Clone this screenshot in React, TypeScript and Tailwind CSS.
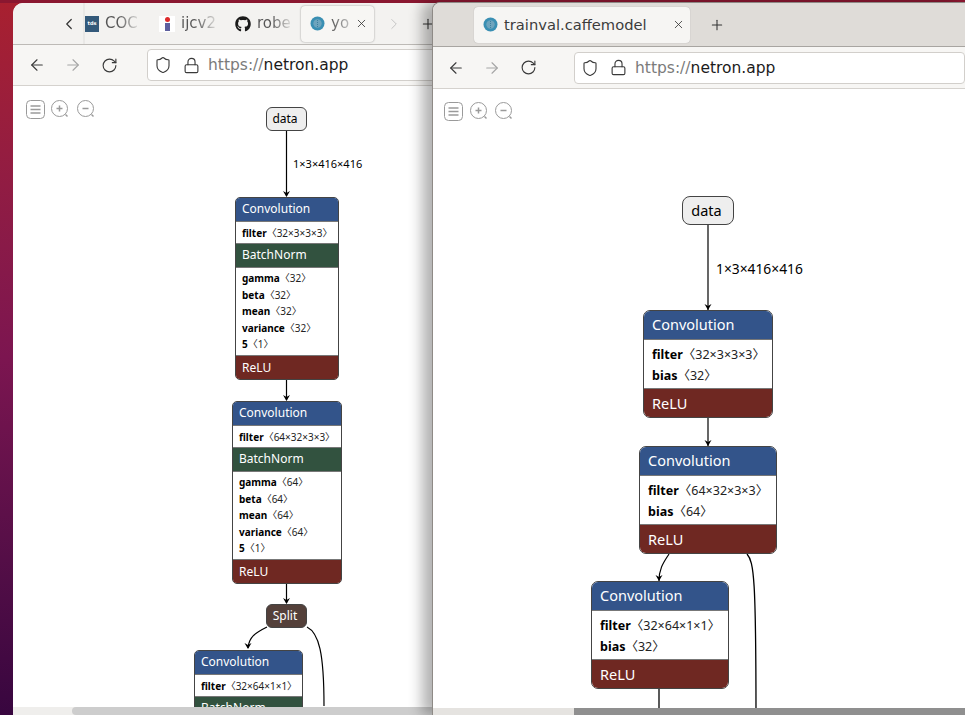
import { ArrowLeft, ArrowRight, ChevronLeft, ChevronRight, Lock, Plus, RotateCw, Shield, X } from 'lucide-react';
import { FaGithub } from 'react-icons/fa';

const uiFont = "font-['DejaVu_Sans',sans-serif]";
const graphFont = "font-['Noto_Sans','Noto_Sans_CJK_SC',sans-serif]";

function NetronIcon() {
  return (
    <svg width="15" height="15" viewBox="0 0 15 15" className="shrink-0">
      <circle cx="7.5" cy="7.5" r="7" fill="#3a8fb3" />
      <circle cx="7.5" cy="7.5" r="4.2" fill="#6ea4bd" />
      <path d="M7.5 4v7" stroke="#3d7f9e" strokeWidth="1" strokeDasharray="1 1" />
    </svg>
  );
}

function FadedText({ children }: { children: string }) {
  return (
    <span className="whitespace-nowrap bg-gradient-to-r from-[#555] from-40% to-[#dcdbd9] bg-clip-text text-[15px] text-transparent">
      {children}
    </span>
  );
}

function Toolbar({ className, boxClass }: { className: string; boxClass: string }) {
  return (
    <div className={`flex shrink-0 items-center border-b border-[#d5d2ce] bg-[#f7f6f4] text-[#3a3a3a] ${className}`}>
      <ArrowLeft size={18} strokeWidth={1.5} />
      <ArrowRight size={18} strokeWidth={1.5} className="ml-[18px] text-[#a5a5a5]" />
      <RotateCw size={17} strokeWidth={1.6} className="ml-[19px]" />
      <div className={`flex h-8 grow items-center rounded-[4px] border border-[#d2cfcb] bg-white pl-[6px] ${boxClass}`}>
        <Shield size={18} strokeWidth={1.5} />
        <Lock size={17} strokeWidth={1.6} className="ml-[11px]" />
        <span className={`ml-2 pt-[2px] text-[15.5px] ${uiFont}`}>
          <span className="text-[#7b7b7b]">https://</span>
          <span className="text-[#1b1b1b]">netron.app</span>
        </span>
      </div>
    </div>
  );
}

function ZoomIcon({ minus }: { minus?: boolean }) {
  return (
    <svg width="20" height="20" viewBox="0 0 20 20" fill="none" stroke="#9a9a9a" strokeWidth="1">
      <circle cx="9.5" cy="9.5" r="8" />
      <path d={minus ? 'M6.5 9.5h6' : 'M6.5 9.5h6M9.5 6.5v6'} strokeWidth="1.5" />
      <path d="M15.5 15.5l2 2" strokeWidth="1.5" />
    </svg>
  );
}

function GraphTools() {
  return (
    <div className="flex items-center gap-[5.5px]">
      <svg width="19" height="19" viewBox="0 0 19 19" fill="none" stroke="#9a9a9a">
        <rect x="0.5" y="0.5" width="18" height="18" rx="4" />
        <path d="M4.5 6h10M4.5 9.5h10M4.5 13h10" strokeWidth="1.3" />
      </svg>
      <ZoomIcon />
      <ZoomIcon minus />
    </div>
  );
}

type Row = [string, string];

type NodeProps = {
  x: number;
  y: number;
  w: number;
  big?: boolean;
  sections: (string | Row[])[];
};

const sectionColors: Record<string, string> = {
  Convolution: 'bg-[#33548a] leading-[var(--head)]',
  BatchNorm: 'bg-[#32523f] leading-[var(--line)]',
  ReLU: 'bg-[#6f2822] leading-[var(--foot)]',
};

function GraphNode({ x, y, w, big, sections }: NodeProps) {
  return (
    <div
      className={`absolute overflow-hidden border border-[#444] bg-white ${graphFont} ${big ? 'rounded-[7px] [--foot:28px] [--head:26px] [--line:28px]' : 'rounded-[5px] [--foot:23px] [--head:22px] [--line:22px]'}`}
      style={{ left: x, top: y, width: w }}
    >
      {sections.map((section, i) =>
        typeof section === 'string' ? (
          <div
            key={i}
            className={`${sectionColors[section]} text-white ${big ? 'h-[28px] pl-2 text-[14.5px]' : 'h-[23px] pl-[6px] text-[12px]'}`}
          >
            {section}
          </div>
        ) : (
          <div
            key={i}
            className={`border-y border-[#777] text-black ${big ? 'pb-[2.5px] pl-2 pt-[3.5px] text-[12.5px] leading-[21px]' : 'pb-[1.5px] pl-[6px] pt-[2.5px] text-[10px] leading-[16.6px]'}`}
          >
            {section.map(([name, value]) => (
              <div key={name} className="whitespace-nowrap">
                <b>{name}</b>
                <span className="text-[#222]">〈{value}〉</span>
              </div>
            ))}
          </div>
        ),
      )}
    </div>
  );
}

function Pill({ x, y, w, h, dark, big, label }: { x: number; y: number; w: number; h: number; dark?: boolean; big?: boolean; label: string }) {
  return (
    <div
      className={`absolute flex items-center justify-center border border-[#444] pr-[3px] ${graphFont} ${big ? 'rounded-[8px] text-[14.5px]' : 'rounded-[6px] text-[12px]'} ${dark ? 'bg-[#54403a] text-white' : 'bg-[#eeeeee] text-black'}`}
      style={{ left: x, top: y, width: w, height: h }}
    >
      {label}
    </div>
  );
}

function Arrow({ d, tip }: { d: string; tip: [number, number] }) {
  const [x, y] = tip;
  return (
    <>
      <path d={d} fill="none" stroke="#000" strokeWidth="1.2" />
      <path d={`M${x - 3.5} ${y - 6}L${x} ${y}L${x + 3.5} ${y - 6}L${x} ${y - 4}Z`} fill="#000" />
    </>
  );
}

function LeftWindow() {
  return (
    <section className="absolute left-[13px] top-[3px] flex h-[712px] w-[952px] flex-col overflow-hidden rounded-t-[10px] bg-white">
      <div className={`flex h-[42px] shrink-0 items-center border-b border-[#bdbab6] bg-[#f3f2f0] ${uiFont}`}>
        <div className="flex h-full w-[72px] items-center justify-end border-r-2 border-[#e9e8e6] pr-[5px] text-[#333]">
          <ChevronLeft size={18} strokeWidth={1.6} />
        </div>
        <div className="flex w-[74px] items-center gap-[6px]">
          <span className="flex h-4 w-[14px] items-center justify-center bg-[#33597a] text-[5px] font-bold text-white">tds</span>
          <FadedText>COC</FadedText>
        </div>
        <div className="flex w-[76px] items-center gap-[6px]">
          <span className="flex h-4 w-4 flex-col items-center bg-white pt-px">
            <span className="h-[5px] w-[5px] rounded-full bg-[#dd2a2a]" />
            <span className="mt-px h-2 w-[5px] bg-[#5e5f9e]" />
          </span>
          <FadedText>ijcv2</FadedText>
        </div>
        <div className="flex w-[66px] items-center gap-[6px]">
          <FaGithub size={16} className="text-[#1a1a1a]" />
          <FadedText>robe</FadedText>
        </div>
        <div className="flex h-[36px] w-[73px] items-center gap-[6px] rounded-[4px] bg-[#f7f6f4] pl-[9px] shadow-[0_0_2px_rgba(0,0,0,0.4)]">
          <NetronIcon />
          <span className="w-[23px] whitespace-nowrap bg-gradient-to-r from-[#555] to-[#ddd] bg-clip-text text-[15px] text-transparent">yo</span>
          <X size={13} strokeWidth={1.5} className="-ml-[5px] text-[#333]" />
        </div>
        <ChevronRight size={18} strokeWidth={1.2} className="ml-[11px] text-[#c0c0c0]" />
        <Plus size={16} strokeWidth={1.6} className="ml-[17px] text-[#333]" />
      </div>
      <Toolbar className="h-[41px] pl-[15px]" boxClass="ml-[29px]" />
      <div className="relative grow bg-white">
        <div className="absolute left-[12.5px] top-[13px]">
          <GraphTools />
        </div>
        <svg className="absolute left-0 top-0" width="420" height="630">
          <Arrow d="M273.5 44V110" tip={[273.5, 111]} />
          <Arrow d="M273.5 293V314" tip={[273.5, 315]} />
          <Arrow d="M273.5 496V517" tip={[273.5, 518]} />
          <Arrow d="M254 541C242 547 236 551 235 562" tip={[235, 563]} />
          <path d="M294 541C306 547 311 567 311 620" fill="none" stroke="#000" strokeWidth="1.2" />
        </svg>
        <Pill x={253} y={21} w={41} h={24} label="data" />
        <span className={`absolute left-[280px] top-[70px] text-[11px] text-black ${graphFont}`}>1×3×416×416</span>
        <GraphNode
          x={222}
          y={111}
          w={104}
          sections={[
            'Convolution',
            [['filter', '32×3×3×3']],
            'BatchNorm',
            [['gamma', '32'], ['beta', '32'], ['mean', '32'], ['variance', '32'], ['5', '1']],
            'ReLU',
          ]}
        />
        <GraphNode
          x={219}
          y={315}
          w={110}
          sections={[
            'Convolution',
            [['filter', '64×32×3×3']],
            'BatchNorm',
            [['gamma', '64'], ['beta', '64'], ['mean', '64'], ['variance', '64'], ['5', '1']],
            'ReLU',
          ]}
        />
        <Pill x={253} y={518} w={41} h={24} dark label="Split" />
        <GraphNode x={181} y={564} w={109} sections={['Convolution', [['filter', '32×64×1×1']], 'BatchNorm']} />
        <div className="absolute bottom-0 left-0 right-0 h-2 bg-[#efeeec]">
          <div className="ml-[59px] h-2 rounded-full bg-[#cdcdcd]" />
        </div>
      </div>
    </section>
  );
}

function RightWindow() {
  return (
    <section className="absolute left-[432px] top-[2px] flex h-[713px] w-[533px] flex-col overflow-hidden rounded-tl-[8px] border-l border-t border-[#8e8a86] bg-white shadow-[-10px_0_14px_rgba(0,0,0,0.3)]">
      <div className={`flex h-[44px] shrink-0 items-center border-b border-[#a8a5a1] bg-[#dfdcd8] pl-[41px] ${uiFont}`}>
        <div className="flex h-9 w-[216px] items-center rounded-[4px] bg-[#f6f5f3] pl-[9px] shadow-[0_0_1px_rgba(0,0,0,0.3)]">
          <NetronIcon />
          <span className="ml-[6px] pt-px text-[14.7px] text-[#3c3c3c]">trainval.caffemodel</span>
          <X size={13} strokeWidth={1.5} className="ml-[25px] text-[#333]" />
        </div>
        <Plus size={16} strokeWidth={1.6} className="ml-[19px] text-[#333]" />
      </div>
      <Toolbar className="h-[42px] pl-[14px]" boxClass="ml-[37px]" />
      <div className="relative grow bg-white">
        <div className="absolute left-[11px] top-[12px]">
          <GraphTools />
        </div>
        <svg className="absolute left-0 top-0" width="532" height="630">
          <Arrow d="M275 136V221" tip={[275, 221]} />
          <Arrow d="M275 329V357" tip={[275, 357]} />
          <Arrow d="M236 465C231 473 226 479 226 492" tip={[226, 492]} />
          <path d="M314 465C321 473 323 489 323 630" fill="none" stroke="#000" strokeWidth="1.3" />
          <path d="M226 600V630" fill="none" stroke="#000" strokeWidth="1.3" />
        </svg>
        <Pill x={249} y={107} w={52} h={29} big label="data" />
        <span className={`absolute left-[283px] top-[170px] text-[13.8px] text-black ${graphFont}`}>1×3×416×416</span>
        <GraphNode x={210} y={221} w={130} big sections={['Convolution', [['filter', '32×3×3×3'], ['bias', '32']], 'ReLU']} />
        <GraphNode x={206} y={357} w={138} big sections={['Convolution', [['filter', '64×32×3×3'], ['bias', '64']], 'ReLU']} />
        <GraphNode x={158} y={492} w={138} big sections={['Convolution', [['filter', '32×64×1×1'], ['bias', '32']], 'ReLU']} />
        <div className="absolute bottom-0 left-0 right-0 h-[7px] bg-[#e5e3e0]">
          <div className="ml-[141px] h-[7px] bg-[#8f8f8f]" />
        </div>
      </div>
    </section>
  );
}

export default function App() {
  return (
    <div className="relative h-[715px] w-[965px] overflow-hidden bg-gradient-to-b from-[#a8202f] via-[#7c1550] to-[#38063f]">
      <div className="absolute inset-x-0 top-0 h-[3px] bg-[#8a1730]" />
      <LeftWindow />
      <RightWindow />
    </div>
  );
}
